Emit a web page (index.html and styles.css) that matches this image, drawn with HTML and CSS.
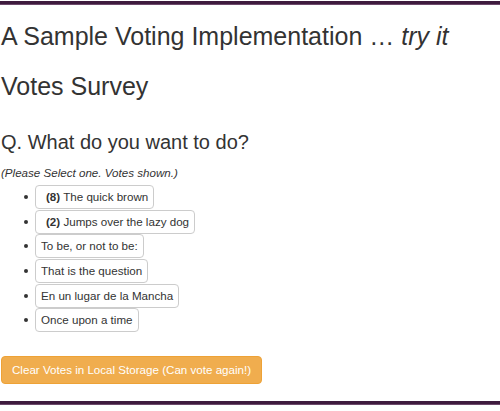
FILE: index.html
```html
<!DOCTYPE html>
<html>
<head>
<meta charset="utf-8">
<link rel="stylesheet" href="styles.css">
</head>
<body>
<div class="page">
  <div class="rule rule-top"></div>
  <h1 class="title">A Sample Voting Implementation … <em>try it</em></h1>
  <h2 class="survey">Votes Survey</h2>
  <h3 class="question">Q. What do you want to do?</h3>
  <p class="hint">(Please Select one. Votes shown.)</p>
  <ul class="options">
    <li><button class="opt"><b class="count">(8)</b> The quick brown</button></li>
    <li><button class="opt"><b class="count">(2)</b> Jumps over the lazy dog</button></li>
    <li><button class="opt">To be, or not to be:</button></li>
    <li><button class="opt">That is the question</button></li>
    <li><button class="opt">En un lugar de la Mancha</button></li>
    <li><button class="opt">Once upon a time</button></li>
  </ul>
  <button class="clear">Clear Votes in Local Storage (Can vote again!)</button>
  <div class="rule rule-bottom"></div>
</div>
</body>
</html>
```
FILE: styles.css
```css
html, body {
  margin: 0;
  padding: 0;
  background: #fff;
}
body {
  font-family: "Liberation Sans", Arial, sans-serif;
  color: #333;
}
.page {
  padding: 1px 1px 0 1px;
  display: flex;
  flex-direction: column;
  align-items: flex-start;
}
.rule {
  align-self: stretch;
  height: 3px;
  background: #3e1b3e;
  border-bottom: 1px solid #6d4a6b;
  margin-left: -1px;
  margin-right: -1px;
}
.title {
  font-size: 25px;
  font-weight: normal;
  line-height: 27px;
  margin: 18px 0 0 0;
}
.survey {
  font-size: 25px;
  font-weight: normal;
  line-height: 27px;
  margin: 23px 0 0 0;
}
.question {
  font-size: 20px;
  font-weight: normal;
  line-height: 22px;
  margin: 31px 0 0 0;
}
.hint {
  font-size: 11.6px;
  font-style: italic;
  line-height: 17px;
  margin: 11px 0 0 0;
}
.options {
  list-style: none;
  margin: 4px 0 0 0;
  padding-left: 23px;
}
.options li {
  display: flex;
  align-items: center;
  margin-bottom: 0.7px;
}
.options li::before {
  content: "";
  width: 4px;
  height: 4px;
  border-radius: 50%;
  background: #333;
  margin-right: 7px;
}
.opt {
  font-family: "Liberation Sans", Arial, sans-serif;
  font-size: 11.6px;
  line-height: 16px;
  padding: 3px 5px;
  color: #333;
  background: #fff;
  border: 1px solid #ccc;
  border-radius: 4px;
}
.count {
  margin-left: 5px;
}
.clear {
  font-family: "Liberation Sans", Arial, sans-serif;
  margin-top: 23px;
  font-size: 11.6px;
  line-height: 18px;
  padding: 4px 10px;
  color: #fff;
  background: #f0ad4e;
  border: 1px solid #eea236;
  border-radius: 4px;
}
.rule-bottom {
  margin-top: 17px;
}
```
